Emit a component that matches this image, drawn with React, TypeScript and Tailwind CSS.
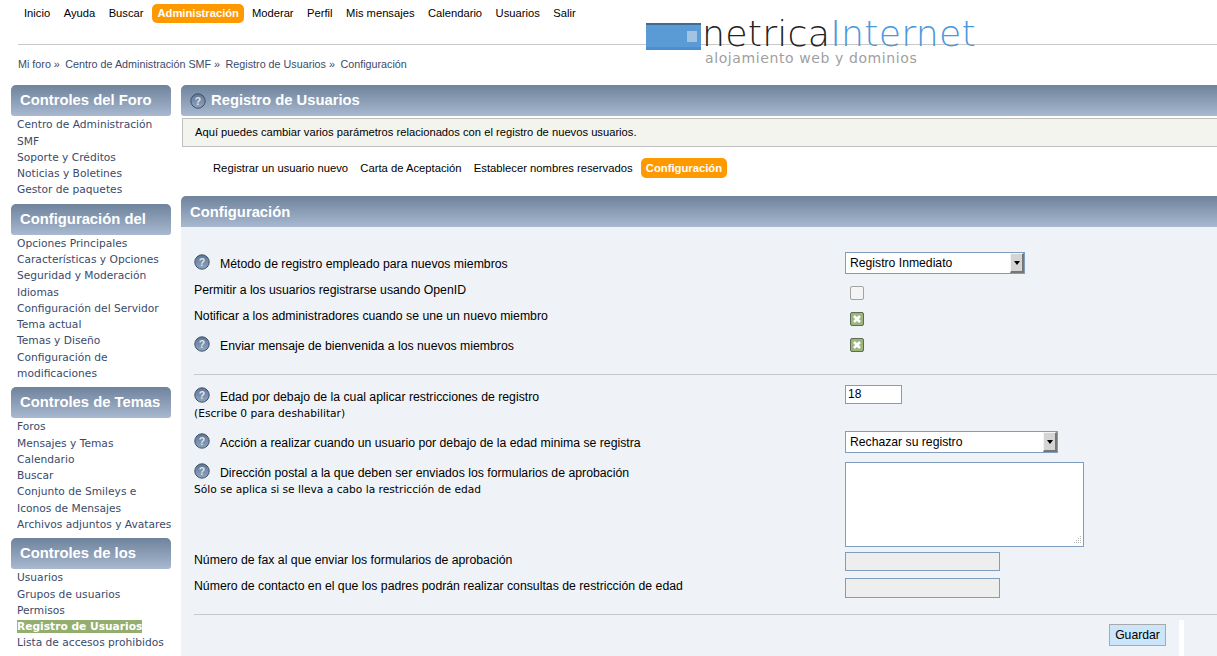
const SANS = 'font-["Liberation_Sans",Arial,sans-serif]';

const sideSections = [
  {
    title: 'Controles del Foro',
    links: ['Centro de Administración SMF', 'Soporte y Créditos', 'Noticias y Boletines', 'Gestor de paquetes'],
  },
  {
    title: 'Configuración del',
    links: [
      'Opciones Principales',
      'Características y Opciones',
      'Seguridad y Moderación',
      'Idiomas',
      'Configuración del Servidor',
      'Tema actual',
      'Temas y Diseño',
      'Configuración de modificaciones',
    ],
  },
  {
    title: 'Controles de Temas',
    links: [
      'Foros',
      'Mensajes y Temas',
      'Calendario',
      'Buscar',
      'Conjunto de Smileys e Iconos de Mensajes',
      'Archivos adjuntos y Avatares',
    ],
  },
  {
    title: 'Controles de los',
    links: ['Usuarios', 'Grupos de usuarios', 'Permisos', 'Registro de Usuarios', 'Lista de accesos prohibidos'],
  },
];

const navItems = ['Inicio', 'Ayuda', 'Buscar', 'Administración', 'Moderar', 'Perfil', 'Mis mensajes', 'Calendario', 'Usuarios', 'Salir'];

function HelpIcon({ size = 16 }: { size?: number }) {
  return (
    <svg width={size} height={size} viewBox="0 0 16 16" className="shrink-0">
      <defs>
        <linearGradient id="helpFill" x1="0" y1="0" x2="0" y2="1">
          <stop offset="0" stopColor="#5f7796" />
          <stop offset="1" stopColor="#8fa6c2" />
        </linearGradient>
      </defs>
      <circle cx="8" cy="8" r="7.2" fill="url(#helpFill)" stroke="#3d5068" strokeWidth="1" />
      <text x="8" y="11.6" textAnchor="middle" fontSize="10.5" fontWeight="700" fill="#dfe6ee" fontFamily="Liberation Sans, sans-serif">
        ?
      </text>
    </svg>
  );
}

function SelectBox({ label, width }: { label: string; width: string }) {
  return (
    <div className={`${width} pl-[4px] -mt-[1px] h-[22px] bg-white border border-[#7f9dbd] flex items-center justify-between text-[12.2px] text-black`}>
      <span>{label}</span>
      <span className="w-[14px] h-[20px] bg-[#d4d4d4] border-t border-l border-t-[#f4f4f4] border-l-[#f4f4f4] border-r-2 border-b-2 border-r-[#777] border-b-[#777] flex items-center justify-center">
        <span className="w-0 h-0 border-l-[3px] border-r-[3px] border-t-[4px] border-l-transparent border-r-transparent border-t-black" />
      </span>
    </div>
  );
}

function Check({ on }: { on?: boolean }) {
  if (!on) return <div className="ml-[5px] mt-[3px] w-[14px] h-[14px] rounded-[2px] border border-[#a3a3a3] bg-[#f4f4f4]" />;
  return (
    <div className="ml-[5px] mt-[3px] w-[14px] h-[14px] rounded-[2px] border border-[#5f6b58] bg-[#9cb57c] flex items-center justify-center">
      <svg width="8" height="8" viewBox="0 0 8 8">
        <path d="M1 1L7 7M7 1L1 7" stroke="#fff" strokeWidth="2.6" />
      </svg>
    </div>
  );
}

function Row({ help, height, label, sub, children, subClass }: { help?: boolean; height: string; label: string; sub?: string; subClass?: string; children: React.ReactNode }) {
  return (
    <div className={`flex ${height}`}>
      <div className="w-[651px] shrink-0">
        <div className="flex items-start">
          {help && (
            <span className="w-[26px] shrink-0 mt-[1px]">
              <HelpIcon />
            </span>
          )}
          <span className={`text-[12.28px] leading-[14px] text-black ${help ? 'mt-[4px]' : ''}`}>{label}</span>
        </div>
        {sub && <div className={`font-['DejaVu_Sans',sans-serif] text-[10.67px] leading-[13px] text-black ${subClass ?? ''}`}>{sub}</div>}
      </div>
      <div>{children}</div>
    </div>
  );
}

export default function App() {
  return (
    <div className={`relative w-[1217px] h-[656px] overflow-hidden bg-white ${SANS}`}>
      <div className="relative h-[85px]">
        <nav className="flex items-center gap-[3.5px] pl-[19px] pt-[4px] text-[11.2px] text-black">
          {navItems.map((n) => (
            <span
              key={n}
              className={
                n === 'Administración'
                  ? 'ml-[0.5px] -mr-[0.5px] h-[19px] leading-[19px] px-[5px] rounded-[5px] bg-[#ff9900] text-white font-bold'
                  : 'h-[19px] leading-[19px] px-[5px]'
              }
            >
              {n}
            </span>
          ))}
        </nav>
        <div className="mt-[21px] ml-[18px] border-t border-[#c9c9c9]" />
        <div className="mt-[12px] ml-[18px] flex gap-[5.5px] text-[10.75px] leading-[14px] text-[#3a4a6b]">
          <span>Mi foro »</span>
          <span>Centro de Administración SMF »</span>
          <span>Registro de Usuarios »</span>
          <span>Configuración</span>
        </div>
        <div className="absolute left-[646px] top-[23px] w-[55px] h-[27px] bg-[#5b9bd5] border-t-2 border-t-[#3f6a92] border-b-[3px] border-b-[#4a90d0]">
          <div className="absolute right-[4px] top-[6px] w-[10px] h-[11px] bg-[#a3c3e2]" />
        </div>
        <div className="absolute left-[702px] top-[18px] font-['DejaVu_Sans',sans-serif] font-extralight text-[36.3px] leading-[31px] tracking-[0.2px]">
          <span className="text-[#222]">netrica</span>
          <span className="text-[#4a98dc]">Internet</span>
        </div>
        <div className="absolute left-[705px] top-[50px] font-['DejaVu_Sans',sans-serif] text-[14px] leading-[16px] tracking-[0.6px] text-[#a0a0a0]">
          alojamiento web y dominios
        </div>
      </div>

      <div className="flex">
        <aside className="w-[160px] ml-[11px] shrink-0 font-['DejaVu_Sans',sans-serif]">
          {sideSections.map((s) => (
            <div key={s.title} className="mb-[5px]">
              <div className={`h-[31px] rounded-t-[5px] rounded-b-[3px] bg-gradient-to-b from-[#6f839c] to-[#a8b9d0] text-white font-bold text-[14.8px] leading-[30px] pl-[9px] ${SANS}`}>
                {s.title}
              </div>
              <ul className="-mr-[2px] pl-[6px] pt-[1.25px] text-[10.67px] leading-[16.25px] text-[#3a4a6b]">
                {s.links.map((l) => (
                  <li key={l}>
                    {l === 'Registro de Usuarios' ? (
                      <span className="bg-[#94ae6f] text-white font-bold">{l}</span>
                    ) : (
                      l
                    )}
                  </li>
                ))}
              </ul>
            </div>
          ))}
        </aside>

        <main className="ml-[10px] flex-1 min-w-0">
          <div className="h-[31px] rounded-tl-[5px] rounded-bl-[3px] bg-gradient-to-b from-[#6f839c] to-[#a8b9d0] flex items-center pl-[9px] gap-[5px] text-white font-bold text-[14.8px]">
            <HelpIcon />
            <span>Registro de Usuarios</span>
          </div>
          <div className="mt-[2px] ml-[1px] h-[29px] bg-[#f3f4ee] border border-[#bfbfbf] border-r-0 pl-[12px] text-[11.2px] leading-[27px] text-black">
            Aquí puedes cambiar varios parámetros relacionados con el registro de nuevos usuarios.
          </div>
          <div className="mt-[11px] h-[20px] flex items-center gap-[12.2px] pl-[32px] text-[11.25px] text-black">
            <span>Registrar un usuario nuevo</span>
            <span>Carta de Aceptación</span>
            <span>Establecer nombres reservados</span>
            <span className="-ml-[4px] h-[20px] leading-[20px] px-[5px] rounded-[5px] bg-[#ff9900] text-white font-bold">Configuración</span>
          </div>
          <div className="mt-[18px] h-[31px] rounded-tl-[5px] bg-gradient-to-b from-[#6f839c] to-[#a8b9d0] text-white font-bold text-[14.8px] leading-[32px] pl-[9px]">
            Configuración
          </div>
          <div className="h-[500px] bg-[#eff3f7] pl-[13px] pt-[26px]">
            <Row help height="h-[30px]" label="Método de registro empleado para nuevos miembros">
              <SelectBox label="Registro Inmediato" width="w-[180px]" />
            </Row>
            <Row height="h-[26px]" label="Permitir a los usuarios registrarse usando OpenID">
              <Check />
            </Row>
            <Row height="h-[26px]" label="Notificar a los administradores cuando se une un nuevo miembro">
              <Check on />
            </Row>
            <Row help height="h-[39px]" label="Enviar mensaje de bienvenida a los nuevos miembros">
              <Check on />
            </Row>
            <div className="border-t border-[#c9c9c9] mb-[11px]" />
            <Row help height="h-[46px]" label="Edad por debajo de la cual aplicar restricciones de registro" sub="(Escribe 0 para deshabilitar)" subClass="mt-[3px]">
              <div className="-mt-[1px] w-[57px] h-[19px] bg-white border border-[#7f9dbd] text-[12px] leading-[17px] pl-[2px] text-black">18</div>
            </Row>
            <Row help height="h-[30px]" label="Acción a realizar cuando un usuario por debajo de la edad minima se registra">
              <SelectBox label="Rechazar su registro" width="w-[213px]" />
            </Row>
            <Row help height="h-[91px]" label="Dirección postal a la que deben ser enviados los formularios de aprobación" sub="Sólo se aplica si se lleva a cabo la restricción de edad" subClass="mt-[3px]">
              <div className="relative w-[239px] h-[85px] bg-white border border-[#7f9dbd]">
                <svg width="10" height="10" viewBox="0 0 10 10" className="absolute right-[1px] bottom-[1px]">
                  <path d="M8 1h1v1H8zM6 3h1v1H6zM8 3h1v1H8zM4 5h1v1H4zM6 5h1v1H6zM8 5h1v1H8zM2 7h1v1H2zM4 7h1v1H4zM6 7h1v1H6zM8 7h1v1H8z" fill="#b5b5b5" />
                </svg>
              </div>
            </Row>
            <Row height="h-[26px]" label="Número de fax al que enviar los formularios de aprobación">
              <div className="-mt-[1px] w-[155px] h-[19px] bg-[#eeeeee] border border-[#7f9dbd]" />
            </Row>
            <Row height="h-[35px]" label="Número de contacto en el que los padres podrán realizar consultas de restricción de edad">
              <div className="-mt-[1px] w-[155px] h-[20px] bg-[#eeeeee] border border-[#7f9dbd]" />
            </Row>
            <div className="border-t border-[#c9c9c9]" />
            <div className="flex mt-[5px]">
              <div className="ml-[915px] mt-[4px] w-[57px] h-[22px] bg-[#cbe5fb] border border-[#a9a9a9] text-[12.2px] leading-[20px] text-center text-black">Guardar</div>
              <div className="ml-[13px] w-[5px] h-[36px] bg-white" />
            </div>
          </div>
        </main>
      </div>
    </div>
  );
}
